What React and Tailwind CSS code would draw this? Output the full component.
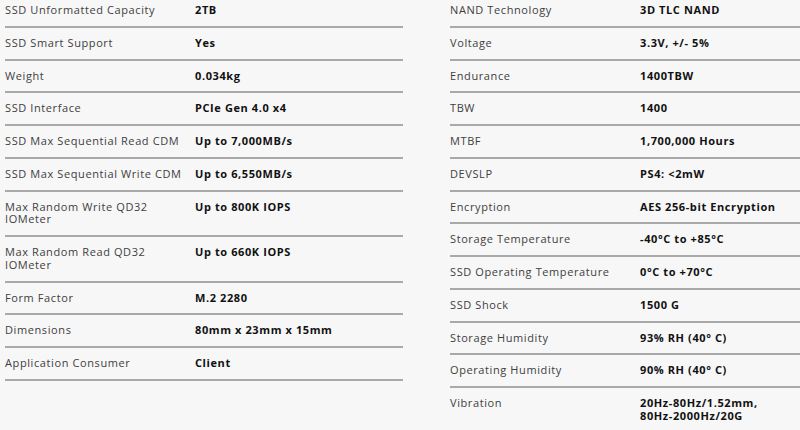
const left = [
  ["SSD Unformatted Capacity", "2TB"],
  ["SSD Smart Support", "Yes"],
  ["Weight", "0.034kg"],
  ["SSD Interface", "PCIe Gen 4.0 x4"],
  ["SSD Max Sequential Read CDM", "Up to 7,000MB/s"],
  ["SSD Max Sequential Write CDM", "Up to 6,550MB/s"],
  ["Max Random Write QD32\nIOMeter", "Up to 800K IOPS"],
  ["Max Random Read QD32\nIOMeter", "Up to 660K IOPS"],
  ["Form Factor", "M.2 2280"],
  ["Dimensions", "80mm x 23mm x 15mm"],
  ["Application Consumer", "Client"],
];

const right = [
  ["NAND Technology", "3D TLC NAND"],
  ["Voltage", "3.3V, +/- 5%"],
  ["Endurance", "1400TBW"],
  ["TBW", "1400"],
  ["MTBF", "1,700,000 Hours"],
  ["DEVSLP", "PS4: <2mW"],
  ["Encryption", "AES 256-bit Encryption"],
  ["Storage Temperature", "-40°C to +85°C"],
  ["SSD Operating Temperature", "0°C to +70°C"],
  ["SSD Shock", "1500 G"],
  ["Storage Humidity", "93% RH (40° C)"],
  ["Operating Humidity", "90% RH (40° C)"],
  ["Vibration", "20Hz-80Hz/1.52mm,\n80Hz-2000Hz/20G"],
];

function SpecRow({ label, value }) {
  return (
    <div className="grid grid-cols-[190px_1fr] py-[9px] border-b-2 border-[#a9a9a9] leading-[12.75px] whitespace-pre">
      <div className="text-[#404040]">{label}</div>
      <div className="font-bold text-[#111]">{value}</div>
    </div>
  );
}

export default function App() {
  return (
    <div
      className="w-[800px] h-[430px] overflow-hidden bg-[#f7f7f7] text-[11px] tracking-[0.6px]"
      style={{ fontFamily: '"Open Sans", "DejaVu Sans", sans-serif' }}
    >
      <div className="flex -mt-[5px]">
        <div className="w-[398px] ml-[5px]">
          {left.map(([l, v]) => (
            <SpecRow key={l} label={l} value={v} />
          ))}
        </div>
        <div className="flex-1 ml-[47px]">
          {right.map(([l, v]) => (
            <SpecRow key={l} label={l} value={v} />
          ))}
        </div>
      </div>
    </div>
  );
}
